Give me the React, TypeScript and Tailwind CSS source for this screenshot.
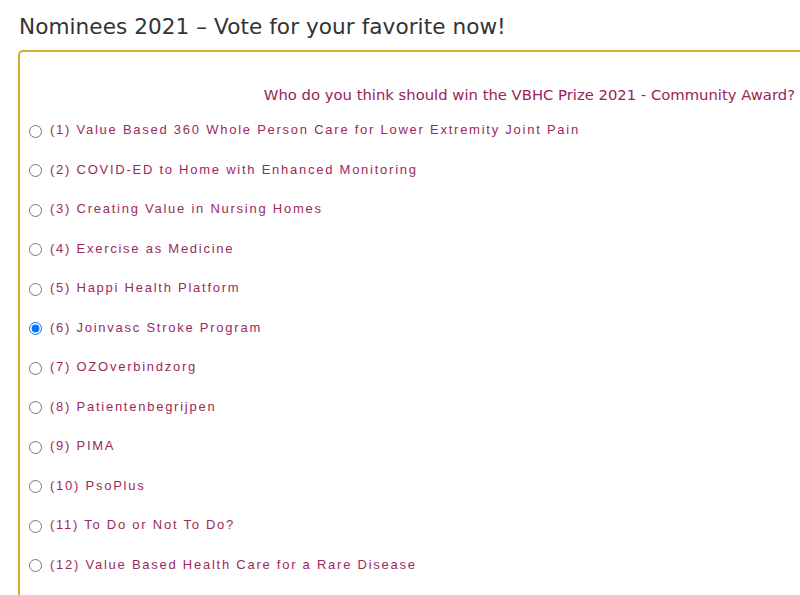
const nominees = [
  '(1) Value Based 360 Whole Person Care for Lower Extremity Joint Pain',
  '(2) COVID-ED to Home with Enhanced Monitoring',
  '(3) Creating Value in Nursing Homes',
  '(4) Exercise as Medicine',
  '(5) Happi Health Platform',
  '(6) Joinvasc Stroke Program',
  '(7) OZOverbindzorg',
  '(8) Patientenbegrijpen',
  '(9) PIMA',
  '(10) PsoPlus',
  '(11) To Do or Not To Do?',
  '(12) Value Based Health Care for a Rare Disease',
];

export default function App() {
  return (
    <div className="w-[800px] h-[595px] overflow-hidden bg-white">
      <h1 className="pl-[19px] pt-[13px] h-[50px] text-[21.6px] tracking-[0.05px] leading-[28px] text-[#333333] font-['DejaVu_Sans',Verdana,sans-serif]">
        Nominees 2021 – Vote for your favorite now!
      </h1>
      <div className="ml-[18px] w-[820px] border-2 border-[#d6ad2a] rounded-tl-[5px] h-[600px]">
        <div className="w-[775px] flex justify-end pt-[32px] pb-[4px]">
          <p className="text-[14.8px] leading-[22px] text-[#9c2157] font-['DejaVu_Sans',Verdana,sans-serif] whitespace-nowrap">
            Who do you think should win the VBHC Prize 2021 - Community Award?
          </p>
        </div>
        <form className="flex flex-col">
          {nominees.map((n, i) => (
            <label
              key={n}
              className="flex items-center h-[39.5px] pl-[9px] font-['Liberation_Sans',Arial,sans-serif] text-[13px] tracking-[1.75px] text-[#9c2a5c]"
            >
              <input
                type="radio"
                name="nominee"
                defaultChecked={i === 5}
                className="w-[13px] h-[13px] m-0 mr-[8px] mt-[3px]"
              />
              <span>{n}</span>
            </label>
          ))}
        </form>
      </div>
    </div>
  );
}
